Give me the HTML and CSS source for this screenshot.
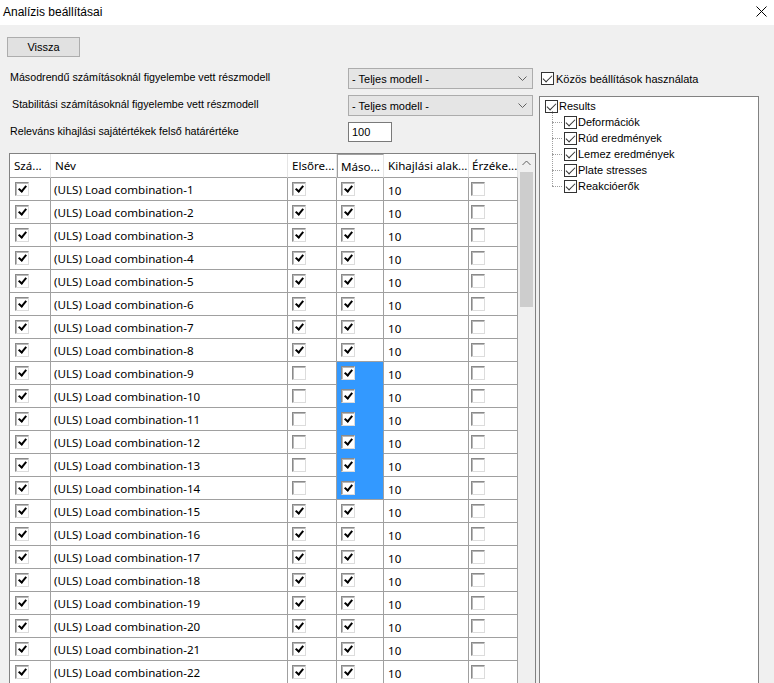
FILE: index.html
```html
<!DOCTYPE html>
<html lang="hu">
<head>
<meta charset="utf-8">
<title>Analízis beállításai</title>
<link rel="stylesheet" href="styles.css">
</head>
<body>
<div class="window">
  <div class="titlebar">
    <span class="title">Analízis beállításai</span>
    <svg class="close" width="11" height="11" viewBox="0 0 11 11"><path d="M0.5 0.5 L10.5 10.5 M10.5 0.5 L0.5 10.5" stroke="#000" stroke-width="1" fill="none"/></svg>
  </div>
  <div class="content">
    <div class="toprow"><button class="btn">Vissza</button></div>
    <div class="main">
      <div class="left">
        <div class="form">
          <span class="lbl">Másodrendű számításoknál figyelembe vett részmodell</span>
          <div class="combo"><span>- Teljes modell -</span><svg width="9" height="6" viewBox="0 0 9 6"><path d="M0.5 0.5 L4.5 4.5 L8.5 0.5" stroke="#606060" fill="none"/></svg></div>
          <span class="lbl lbl2">Stabilitási számításoknál figyelembe vett részmodell</span>
          <div class="combo"><span>- Teljes modell -</span><svg width="9" height="6" viewBox="0 0 9 6"><path d="M0.5 0.5 L4.5 4.5 L8.5 0.5" stroke="#606060" fill="none"/></svg></div>
          <span class="lbl">Releváns kihajlási sajátértékek felső határértéke</span>
          <div class="textbox">100</div>
        </div>
        <div class="gridview">
          <table class="dgv">
            <colgroup><col class="w1"><col class="w2"><col class="w3"><col class="w4"><col class="w5"><col class="w6"></colgroup>
            <thead>
              <tr><th>Szá...</th><th>Név</th><th>Elsőre...</th><th class="hsel">Máso...</th><th>Kihajlási alak...</th><th>Érzéke...</th></tr>
            </thead>
            <tbody>
              <tr><td><span class="cb on"></span></td><td class="nm">(ULS) Load combination-1</td><td><span class="cb on"></span></td><td><span class="cb on"></span></td><td class="num">10</td><td><span class="cb"></span></td></tr>
              <tr><td><span class="cb on"></span></td><td class="nm">(ULS) Load combination-2</td><td><span class="cb on"></span></td><td><span class="cb on"></span></td><td class="num">10</td><td><span class="cb"></span></td></tr>
              <tr><td><span class="cb on"></span></td><td class="nm">(ULS) Load combination-3</td><td><span class="cb on"></span></td><td><span class="cb on"></span></td><td class="num">10</td><td><span class="cb"></span></td></tr>
              <tr><td><span class="cb on"></span></td><td class="nm">(ULS) Load combination-4</td><td><span class="cb on"></span></td><td><span class="cb on"></span></td><td class="num">10</td><td><span class="cb"></span></td></tr>
              <tr><td><span class="cb on"></span></td><td class="nm">(ULS) Load combination-5</td><td><span class="cb on"></span></td><td><span class="cb on"></span></td><td class="num">10</td><td><span class="cb"></span></td></tr>
              <tr><td><span class="cb on"></span></td><td class="nm">(ULS) Load combination-6</td><td><span class="cb on"></span></td><td><span class="cb on"></span></td><td class="num">10</td><td><span class="cb"></span></td></tr>
              <tr><td><span class="cb on"></span></td><td class="nm">(ULS) Load combination-7</td><td><span class="cb on"></span></td><td><span class="cb on"></span></td><td class="num">10</td><td><span class="cb"></span></td></tr>
              <tr><td><span class="cb on"></span></td><td class="nm">(ULS) Load combination-8</td><td><span class="cb on"></span></td><td><span class="cb on"></span></td><td class="num">10</td><td><span class="cb"></span></td></tr>
              <tr><td><span class="cb on"></span></td><td class="nm">(ULS) Load combination-9</td><td><span class="cb"></span></td><td class="sel"><span class="cb on"></span></td><td class="num">10</td><td><span class="cb"></span></td></tr>
              <tr><td><span class="cb on"></span></td><td class="nm">(ULS) Load combination-10</td><td><span class="cb"></span></td><td class="sel"><span class="cb on"></span></td><td class="num">10</td><td><span class="cb"></span></td></tr>
              <tr><td><span class="cb on"></span></td><td class="nm">(ULS) Load combination-11</td><td><span class="cb"></span></td><td class="sel"><span class="cb on"></span></td><td class="num">10</td><td><span class="cb"></span></td></tr>
              <tr><td><span class="cb on"></span></td><td class="nm">(ULS) Load combination-12</td><td><span class="cb"></span></td><td class="sel"><span class="cb on"></span></td><td class="num">10</td><td><span class="cb"></span></td></tr>
              <tr><td><span class="cb on"></span></td><td class="nm">(ULS) Load combination-13</td><td><span class="cb"></span></td><td class="sel"><span class="cb on"></span></td><td class="num">10</td><td><span class="cb"></span></td></tr>
              <tr><td><span class="cb on"></span></td><td class="nm">(ULS) Load combination-14</td><td><span class="cb"></span></td><td class="sel last"><span class="cb on"></span></td><td class="num">10</td><td><span class="cb"></span></td></tr>
              <tr><td><span class="cb on"></span></td><td class="nm">(ULS) Load combination-15</td><td><span class="cb on"></span></td><td><span class="cb on"></span></td><td class="num">10</td><td><span class="cb"></span></td></tr>
              <tr><td><span class="cb on"></span></td><td class="nm">(ULS) Load combination-16</td><td><span class="cb on"></span></td><td><span class="cb on"></span></td><td class="num">10</td><td><span class="cb"></span></td></tr>
              <tr><td><span class="cb on"></span></td><td class="nm">(ULS) Load combination-17</td><td><span class="cb on"></span></td><td><span class="cb on"></span></td><td class="num">10</td><td><span class="cb"></span></td></tr>
              <tr><td><span class="cb on"></span></td><td class="nm">(ULS) Load combination-18</td><td><span class="cb on"></span></td><td><span class="cb on"></span></td><td class="num">10</td><td><span class="cb"></span></td></tr>
              <tr><td><span class="cb on"></span></td><td class="nm">(ULS) Load combination-19</td><td><span class="cb on"></span></td><td><span class="cb on"></span></td><td class="num">10</td><td><span class="cb"></span></td></tr>
              <tr><td><span class="cb on"></span></td><td class="nm">(ULS) Load combination-20</td><td><span class="cb on"></span></td><td><span class="cb on"></span></td><td class="num">10</td><td><span class="cb"></span></td></tr>
              <tr><td><span class="cb on"></span></td><td class="nm">(ULS) Load combination-21</td><td><span class="cb on"></span></td><td><span class="cb on"></span></td><td class="num">10</td><td><span class="cb"></span></td></tr>
              <tr><td><span class="cb on"></span></td><td class="nm">(ULS) Load combination-22</td><td><span class="cb on"></span></td><td><span class="cb on"></span></td><td class="num">10</td><td><span class="cb"></span></td></tr>
            </tbody>
          </table>
          <div class="vscroll">
            <div class="arrow"><svg width="9" height="6" viewBox="0 0 9 6"><path d="M0.5 5 L4.5 1 L8.5 5" stroke="#606060" fill="none"/></svg></div>
            <div class="thumb"></div>
          </div>
        </div>
      </div>
      <div class="right">
        <div class="common"><span class="fcb on"></span><span>Közös beállítások használata</span></div>
        <div class="tree">
          <div class="node root"><span class="fcb on"></span><span>Results</span></div>
          <div class="children">
            <div class="node child"><span class="dots"></span><span class="fcb on"></span><span>Deformációk</span></div>
            <div class="node child"><span class="dots"></span><span class="fcb on"></span><span>Rúd eredmények</span></div>
            <div class="node child"><span class="dots"></span><span class="fcb on"></span><span>Lemez eredmények</span></div>
            <div class="node child"><span class="dots"></span><span class="fcb on"></span><span>Plate stresses</span></div>
            <div class="node child lastchild"><span class="dots"></span><span class="fcb on"></span><span>Reakcióerők</span></div>
          </div>
        </div>
      </div>
    </div>
  </div>
</div>
</body>
</html>
```

FILE: styles.css
```css
* { box-sizing: border-box; }
html, body { margin: 0; padding: 0; }
body {
  width: 774px;
  height: 683px;
  overflow: hidden;
  font-family: "Noto Sans", "DejaVu Sans", sans-serif;
  font-size: 12px;
  color: #000;
  background: #f0f0f0;
}
.window { width: 774px; height: 683px; overflow: hidden; display: flex; flex-direction: column; }
.titlebar {
  height: 25px;
  background: #fff;
  display: flex;
  align-items: center;
  justify-content: space-between;
  padding: 0 7px 2px 3px;
  flex: none;
}
.title { font-family: "Liberation Sans", Arial, sans-serif; font-size: 12px; }
.close { display: block; }
.content { flex: 1; background: #f0f0f0; padding: 12px 0 0 0; }
.toprow { padding-left: 7px; height: 20px; }
.btn {
  width: 73px;
  height: 20px;
  padding: 0;
  margin: 0;
  border: 1px solid #adadad;
  background: #e1e1e1;
  font-family: "Liberation Sans", Arial, sans-serif;
  font-size: 11px;
  line-height: 17px;
  color: #000;
}
.main { display: flex; gap: 4px; padding-left: 9px; margin-top: 11px; }
.left { width: 526px; flex: none; }
.form {
  display: grid;
  grid-template-columns: 339px 185px;
  grid-template-rows: 21px 21px 20px;
  row-gap: 6px;
  align-items: center;
  font-family: "Liberation Sans", Arial, sans-serif;
  font-size: 11px;
}
.lbl {
  font-size: 10.7px;
  padding-left: 1px;
  margin-top: -3px;
}
.lbl2 { padding-left: 3px; }
.combo {
  height: 21px;
  border: 1px solid #acacac;
  background: #e5e5e5;
  display: flex;
  align-items: center;
  justify-content: space-between;
  padding: 0 5px 0 3px;
}
.textbox {
  width: 44px;
  height: 20px;
  border: 1px solid #7a7a7a;
  background: #fff;
  padding: 1px 0 0 3px;
  line-height: 16px;
}
.gridview {
  margin-top: 11px;
  width: 527px;
  height: 600px;
  border: 1px solid #828282;
  background: #fff;
  display: flex;
  align-items: flex-start;
}
.dgv {
  border-spacing: 0;
  table-layout: fixed;
  width: 508px;
  flex: none;
  font-size: 11.6px;
}
.w1 { width: 41px; }
.w2 { width: 237px; }
.w3 { width: 49px; }
.w4 { width: 47px; }
.w5 { width: 85px; }
.w6 { width: 49px; }
.dgv th {
  height: 24px;
  padding: 0 0 0 4px;
  font-weight: normal;
  text-align: left;
  white-space: nowrap;
  overflow: hidden;
  border-right: 1px solid #e5e5e5;
  border-bottom: 1px solid #a0a0a0;
  background: #fff;
}
.dgv th:last-child { padding-left: 3px; }
.dgv th.hsel { border-left: 1px solid #a0a0a0; border-top: 1px solid #a0a0a0; padding-left: 3px; }
.dgv td {
  height: 23px;
  padding: 0 0 0 4px;
  border-right: 1px solid #a0a0a0;
  border-bottom: 1px solid #a0a0a0;
  white-space: nowrap;
  overflow: hidden;
  background: #fff;
  vertical-align: middle;
  line-height: 14px;
}
.dgv td:first-child { padding-left: 5px; }
.dgv td:last-child { padding-left: 2px; }
.dgv td.nm { padding-left: 3px; padding-top: 2px; }
.dgv td.num { padding-left: 4px; padding-top: 3px; }
.dgv td.sel { background: #3399ff; border-bottom-color: #3399ff; }
.dgv td.sel.last { border-bottom-color: #a0a0a0; }
.cb {
  display: block;
  position: relative;
  width: 14px;
  height: 14px;
  background: #fff;
  border: 1px solid;
  border-color: #8a8a8a #dcdcdc #dcdcdc #8a8a8a;
  box-shadow: inset 1px 1px 0 #b8b8b8;
  margin-top: -1px;
}
.cb.on::after {
  content: "";
  position: absolute;
  left: 4px;
  top: 1px;
  width: 3px;
  height: 6px;
  border: solid #000;
  border-width: 0 2px 2px 0;
  transform: rotate(40deg);
}
.vscroll {
  width: 17px;
  flex: none;
  height: 600px;
  background: #f0f0f0;
  display: flex;
  flex-direction: column;
  align-items: center;
}
.arrow { height: 17px; display: flex; align-items: center; justify-content: center; }
.thumb { width: 13px; height: 135px; background: #cdcdcd; margin-top: 1px; }
.right {
  width: 220px;
  flex: none;
  display: flex;
  flex-direction: column;
  font-family: "Liberation Sans", Arial, sans-serif;
  font-size: 11px;
}
.common {
  height: 21px;
  display: flex;
  align-items: center;
  gap: 2px;
  padding-left: 2px;
}
.fcb {
  display: block;
  position: relative;
  width: 13px;
  height: 13px;
  flex: none;
  border: 1px solid #333;
  background: #fff;
}
.fcb.on::after {
  content: "";
  position: absolute;
  left: 3px;
  top: 0px;
  width: 4px;
  height: 8px;
  border: solid #333;
  border-width: 0 1px 1px 0;
  transform: rotate(45deg);
}
.tree {
  margin-top: 7px;
  height: 600px;
  border: 1px solid #828282;
  background: #fff;
  padding: 1px 0 0 5px;
}
.node { height: 16px; display: flex; align-items: center; gap: 1px; }
.children { padding-left: 7px; position: relative; }
.children::before {
  content: "";
  position: absolute;
  left: 7px;
  top: -3px;
  height: 75px;
  border-left: 1px dotted #a0a0a0;
}
.dots { width: 10px; height: 1px; border-top: 1px dotted #a0a0a0; flex: none; margin-right: 1px; }
```
